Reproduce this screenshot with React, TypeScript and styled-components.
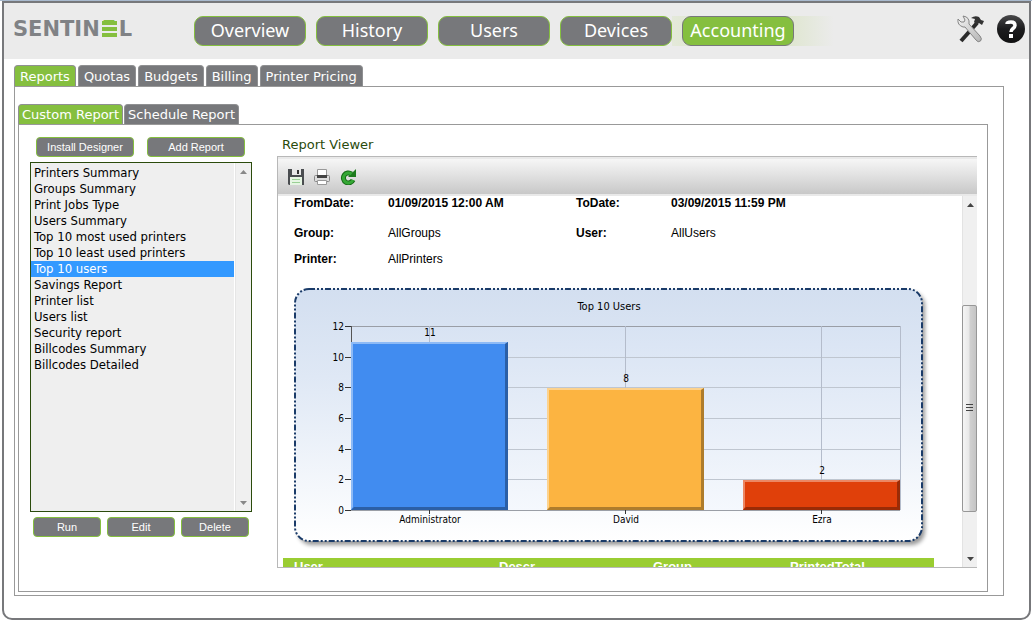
import React, { useState } from "react";
import styled, { createGlobalStyle } from "styled-components";

const green = "#85bf3f";
const grey = "#77787b";
const verdana = '"DejaVu Sans", Verdana, sans-serif';
const tahoma = '"DejaVu Sans Condensed", Tahoma, "DejaVu Sans", sans-serif';
const arial = '"Liberation Sans", Arial, sans-serif';

const GlobalStyle = createGlobalStyle`
  *, *::before, *::after { box-sizing: border-box; }
  body { margin: 0; background: #fff; font-family: ${verdana}; font-size: 13px; color: #000; }
  button, select { font-family: inherit; margin: 0; }
`;

const Page = styled.div`
  border-top: 1px solid #a9bace;
  padding: 0 1px 0 2px;
`;

const Frame = styled.div`
  border: 2px solid ${grey};
  border-radius: 0 0 10px 10px;
  padding-bottom: 22px;
`;

const Header = styled.header`
  display: flex;
  align-items: center;
  height: 56px;
  padding: 0 4px 0 9px;
  background: #ebebeb;
`;

const Logo = styled.div`
  display: flex;
  align-items: center;
  gap: 2px;
  width: 181px;
  padding-bottom: 4px;
  font-size: 21px;
  line-height: 20px;
  font-weight: 700;
  color: #808285;
`;

/* The E of the logo is cut into three bars. */
const LogoE = styled.span`
  position: relative;
  width: 15px;
  color: ${green};

  &::after {
    content: "";
    position: absolute;
    inset: 2px 0;
    background: linear-gradient(
      ${green} 4px,
      #ebebeb 4px 6px,
      ${green} 6px 10px,
      #ebebeb 10px 12px,
      ${green} 12px
    );
  }
`;

const MainNav = styled.nav`
  display: flex;
  gap: 10px;
  flex: 1;
`;

const NavButton = styled.button<{ $active?: boolean }>`
  width: 112px;
  height: 30px;
  padding: 0 0 2px;
  border: 1px solid ${(p) => (p.$active ? grey : green)};
  border-radius: 9px;
  background: ${(p) => (p.$active ? green : grey)};
  color: #fff;
  font-family: "Noto Sans", "Open Sans", sans-serif;
  font-size: 18px;
  line-height: 26px;
  cursor: pointer;
`;

const Glow = styled.span`
  display: flex;
  width: 180px;
  margin: 0 -46px 0 -10px;
  padding-left: 10px;
  background: linear-gradient(90deg, #e4e9da, #dfe6d0 15%, #dfe6d0 65%, #ebebeb 90%);
`;

const HeaderIcons = styled.div`
  display: flex;
  align-items: center;
  gap: 12px;
  padding-bottom: 4px;
`;

const IconButton = styled.button`
  display: flex;
  padding: 0;
  border: 0;
  background: none;
  cursor: pointer;
`;

const Main = styled.main`
  padding: 6px 25px 0 10px;
`;

const Tabs = styled.div<{ $gap: number }>`
  display: flex;
  gap: ${(p) => p.$gap}px;
`;

const Tab = styled.button<{ $active?: boolean; $tight?: boolean }>`
  height: ${(p) => (p.$tight ? 20 : 21)}px;
  padding: ${(p) => (p.$tight ? "0 3px" : "2px 5px 0")};
  border: 1px solid #8f9092;
  border-bottom: 0;
  border-radius: 4px 4px 0 0;
  background: ${(p) => (p.$active ? green : grey)};
  color: #fff;
  font-size: 13px;
  line-height: 18px;
  white-space: nowrap;
  cursor: pointer;
`;

const OuterPanel = styled.section`
  border: 1px solid #999;
  padding: 17px 15px 3px 3px;
`;

const InnerPanel = styled.section`
  display: flex;
  gap: 25px;
  border: 1px solid #999;
  padding: 12px 10px 23px 11px;
`;

const Side = styled.div`
  flex: none;
  width: 222px;
`;

const ButtonRow = styled.div<{ $gap: number; $inset: number }>`
  display: flex;
  gap: ${(p) => p.$gap}px;
  padding-left: ${(p) => p.$inset}px;
  margin-bottom: 5px;
`;

const SmallButton = styled.button<{ $wide?: boolean }>`
  width: ${(p) => (p.$wide ? 98 : 68)}px;
  height: 20px;
  padding: 0;
  border: 1px solid ${green};
  border-radius: 4px;
  background: ${grey};
  color: #fff;
  font-family: ${arial};
  font-size: 11px;
  line-height: 18px;
  cursor: pointer;
`;

const ListBox = styled.div`
  display: flex;
  height: 350px;
  margin-bottom: 5px;
  border: 1px solid #2b4b0c;
  background: #efefef;
`;

const ReportSelect = styled.select`
  flex: 1;
  min-width: 0;
  padding: 2px 0;
  border: 0;
  border-radius: 0;
  outline: 0;
  background: #efefef;
  font-family: ${tahoma};
  font-size: 13px;
  overflow: hidden;

  option {
    height: 16px;
    min-height: 16px;
    padding: 0 3px;
    line-height: 16px;
    color: #000;
  }
  option:checked {
    background: #39f linear-gradient(#39f, #39f);
    color: #fff;
    -webkit-text-fill-color: #fff;
  }
`;

const ScrollTrack = styled.div<{ $light?: boolean }>`
  flex: none;
  display: flex;
  flex-direction: column;
  align-items: center;
  width: ${(p) => (p.$light ? 17 : 15)}px;
  padding: 7px 0 6px;
  border-left: 1px solid ${(p) => (p.$light ? "#fff" : "#e3e3e3")};
  background: ${(p) => (p.$light ? "linear-gradient(90deg, #e6e6e6 1px, #f0f0f0 1px)" : "#f0f0f0")};
`;

const ScrollSpace = styled.div<{ $grow: number }>`
  flex: ${(p) => p.$grow};
`;

const Thumb = styled.div`
  display: flex;
  align-items: center;
  justify-content: center;
  width: 15px;
  height: 207px;
  margin-left: -1px;
  border: 1px solid #979797;
  border-radius: 2px;
  background: linear-gradient(90deg, #f5f5f5, #e9e9e9 45%, #d0d0d0 55%, #c4c4c4);
`;

const Viewer = styled.section`
  flex: 1;
  min-width: 0;
`;

const ViewerTitle = styled.h2`
  margin: 0;
  padding: 0 5px;
  height: 19px;
  color: #2b4b0c;
  font-size: 13px;
  font-weight: 400;
  line-height: 15px;
`;

const ViewerBox = styled.div`
  border: 1px solid #b8b8b8;
  border-right: 0;
`;

const Toolbar = styled.div`
  display: flex;
  align-items: center;
  gap: 10px;
  height: 39px;
  padding: 0 10px;
  border-top: 2px solid #e9e9e9;
  border-bottom: 2px solid #e9e9e9;
  background: linear-gradient(#f6f6f6, #e2e2e2 45%, #c8c8c8);
`;

const ReportArea = styled.div`
  display: flex;
  height: 371px;
  overflow: hidden;
`;

const Report = styled.div`
  flex: 1;
  min-width: 0;
  padding-left: 5px;
  overflow: hidden;
  font-family: ${arial};
`;

const Params = styled.dl`
  display: grid;
  grid-template-columns: 94px 188px 95px 1fr;
  grid-template-rows: 30px 26px 14px;
  margin: 0;
  padding-left: 11px;
  font-size: 12px;
  line-height: 14px;
`;

const Term = styled.dt`
  font-weight: 700;
`;

const Value = styled.dd<{ $bold?: boolean }>`
  margin: 0;
  font-weight: ${(p) => (p.$bold ? 700 : 400)};
`;

const Chart = styled.svg`
  display: block;
  margin: 16px 0 8px 6px;
  text {
    font-family: ${tahoma};
    font-size: 10px;
    fill: #000;
  }
  .title {
    font-size: 11px;
  }
`;

const Totals = styled.table`
  width: 651px;
  table-layout: fixed;
  border-collapse: collapse;
  background: #9acd32;
`;

const TotalsHead = styled.th<{ $w: number }>`
  width: ${(p) => p.$w}px;
  height: 18px;
  padding: 0 0 0 11px;
  color: #fff;
  font-size: 13px;
  line-height: 18px;
  text-align: left;
`;

const reports = [
  "Printers Summary",
  "Groups Summary",
  "Print Jobs Type",
  "Users Summary",
  "Top 10 most used printers",
  "Top 10 least used printers",
  "Top 10 users",
  "Savings Report",
  "Printer list",
  "Users list",
  "Security report",
  "Billcodes Summary",
  "Billcodes Detailed",
];

const bars = [
  { name: "Administrator", value: 11, x: 62, fill: "#418cf0", light: "#8dbaf6", dark: "#2b5fa6" },
  { name: "David", value: 8, x: 258, fill: "#fcb441", light: "#fdd28d", dark: "#ae7c2c" },
  { name: "Ezra", value: 2, x: 454, fill: "#e0400a", light: "#ec8763", dark: "#9a2b06" },
];

const ticks = [0, 2, 4, 6, 8, 10, 12];
const BASE = 228;
const scaleY = (v: number) => Math.round(BASE - (v * 184) / 12);

function BarChart() {
  return (
    <Chart width="640" height="268" viewBox="0 0 640 268" role="img" aria-label="Top 10 Users">
      <defs>
        <linearGradient id="card" x1="0" y1="0" x2="0" y2="1">
          <stop offset="0" stopColor="#d3dff0" />
          <stop offset="0.35" stopColor="#dfe8f5" />
          <stop offset="1" stopColor="#ffffff" />
        </linearGradient>
        <linearGradient id="plot" x1="0" y1="0" x2="0" y2="1">
          <stop offset="0" stopColor="#d8e3f3" />
          <stop offset="1" stopColor="#f5f8fd" />
        </linearGradient>
        <filter id="shade" x="-5%" y="-5%" width="110%" height="115%">
          <feGaussianBlur stdDeviation="2" />
        </filter>
      </defs>
      <rect x="9" y="10" width="627" height="253" rx="14" fill="#000" opacity="0.4" filter="url(#shade)" />
      <rect
        x="6"
        y="7"
        width="627"
        height="252"
        rx="14"
        fill="url(#card)"
        stroke="#1a3b69"
        strokeWidth="2"
        strokeDasharray="6 2 2 2 2 2"
      />
      <text className="title" x="320" y="28" textAnchor="middle">
        Top 10 Users
      </text>
      <rect x="62" y="44" width="549" height="184" fill="url(#plot)" />
      <g shapeRendering="crispEdges" strokeWidth="1">
        {ticks.map((v) => (
          <g key={v}>
            <path d={`M62 ${scaleY(v) + 0.5}H611`} stroke={v === 0 || v === 12 ? "#9a9ea6" : "#bfc6d0"} />
            <path d={`M56 ${scaleY(v) + 0.5}H62`} stroke="#333" />
          </g>
        ))}
        {[140.5, 336.5, 532.5, 611.5].map((x) => (
          <path key={x} d={`M${x} 44V228`} stroke="#b4bccb" />
        ))}
        <path d="M62.5 44V228" stroke="#555" />
      </g>
      {ticks.map((v) => (
        <text key={v} x="55" y={scaleY(v) + 4} textAnchor="end">
          {v}
        </text>
      ))}
      {bars.map((b) => {
        const top = scaleY(b.value) + 1;
        const r = b.x + 157;
        return (
          <g key={b.name}>
            <path d={`M${b.x} ${top}H${r}V${BASE}H${b.x}Z`} fill={b.fill} />
            <path d={`M${b.x} ${BASE}V${top}H${r}L${r - 3} ${top + 2}H${b.x + 2}V${BASE - 3}Z`} fill={b.light} />
            <path d={`M${r} ${top}V${BASE}H${b.x}L${b.x + 3} ${BASE - 3}H${r - 3}V${top + 2}Z`} fill={b.dark} />
            <path d={`M${b.x + 78.5} ${BASE}v4`} stroke="#333" />
            <text x={b.x + 79} y={top - 6} textAnchor="middle">
              {b.value}
            </text>
            <text x={b.x + 79} y="241" textAnchor="middle">
              {b.name}
            </text>
          </g>
        );
      })}
    </Chart>
  );
}

const Arrow = ({ up, color = "#444" }: { up?: boolean; color?: string }) => (
  <svg width="7" height="4" viewBox="0 0 7 4" aria-hidden="true">
    <path d={up ? "M0 4L3.5 0L7 4Z" : "M0 0H7L3.5 4Z"} fill={color} />
  </svg>
);

export default function App() {
  const [report, setReport] = useState("Top 10 users");
  return (
    <>
      <GlobalStyle />
      <Page>
        <Frame>
          <Header>
            <Logo>
              <span>SENTIN</span>
              <LogoE>E</LogoE>
              <span>L</span>
            </Logo>
            <MainNav>
              <NavButton>Overview</NavButton>
              <NavButton>History</NavButton>
              <NavButton>Users</NavButton>
              <NavButton>Devices</NavButton>
              <Glow>
                <NavButton $active>Accounting</NavButton>
              </Glow>
            </MainNav>
            <HeaderIcons>
              <IconButton aria-label="Settings">
                <svg width="28" height="28" viewBox="0 0 28 28">
                  <defs>
                    <linearGradient id="steel" x1="0" y1="0" x2="1" y2="1">
                      <stop offset="0" stopColor="#f4f4f4" />
                      <stop offset="1" stopColor="#b4b4b4" />
                    </linearGradient>
                  </defs>
                  <path d="M20 8L4 26" stroke="#2b2b2b" strokeWidth="4" />
                  <path d="M14 3Q18 0 22 2L24 5L27 6L25 10L22 8L20 10L17 7L18 4Z" fill="#333" />
                  <path
                    d="M6 1L8 5L7 7L4 7L1 4Q0 10 6 12L8 12L19 25Q21 28 23.500 26Q25.500 24 23 21L12 9Q13 2 6 1Z"
                    fill="url(#steel)"
                    stroke="#858585"
                  />
                </svg>
              </IconButton>
              <IconButton aria-label="Help">
                <svg width="28" height="28" viewBox="0 0 28 28">
                  <defs>
                    <linearGradient id="ball" x1="0" y1="0" x2="0" y2="1">
                      <stop offset="0" stopColor="#48484a" />
                      <stop offset="0.5" stopColor="#1c1c1e" />
                      <stop offset="1" stopColor="#111" />
                    </linearGradient>
                  </defs>
                  <circle cx="14" cy="14" r="14" fill="url(#ball)" />
                  <path
                    d="M10 9Q10 7 14 7Q18 7 18 10.500Q18 12 16 13.500Q14 15 14 17"
                    fill="none"
                    stroke="#fff"
                    strokeWidth="3.500"
                  />
                  <rect x="12" y="19" width="4" height="4" fill="#fff" />
                </svg>
              </IconButton>
            </HeaderIcons>
          </Header>
          <Main>
            <Tabs $gap={2}>
              <Tab $active>Reports</Tab>
              <Tab>Quotas</Tab>
              <Tab>Budgets</Tab>
              <Tab>Billing</Tab>
              <Tab>Printer Pricing</Tab>
            </Tabs>
            <OuterPanel>
              <Tabs $gap={1}>
                <Tab $active $tight>
                  Custom Report
                </Tab>
                <Tab $tight>Schedule Report</Tab>
              </Tabs>
              <InnerPanel>
                <Side>
                  <ButtonRow $gap={13} $inset={6}>
                    <SmallButton $wide>Install Designer</SmallButton>
                    <SmallButton $wide>Add Report</SmallButton>
                  </ButtonRow>
                  <ListBox>
                    <ReportSelect
                      size={20}
                      aria-label="Reports"
                      value={report}
                      onChange={(e) => setReport(e.target.value)}
                    >
                      {reports.map((r) => (
                        <option key={r}>{r}</option>
                      ))}
                    </ReportSelect>
                    <ScrollTrack $light>
                      <Arrow up color="#888" />
                      <ScrollSpace $grow={1} />
                      <Arrow color="#888" />
                    </ScrollTrack>
                  </ListBox>
                  <ButtonRow $gap={6} $inset={3}>
                    <SmallButton>Run</SmallButton>
                    <SmallButton>Edit</SmallButton>
                    <SmallButton>Delete</SmallButton>
                  </ButtonRow>
                </Side>
                <Viewer>
                  <ViewerTitle>Report Viewer</ViewerTitle>
                  <ViewerBox>
                    <Toolbar>
                      <IconButton aria-label="Save">
                        <svg width="16" height="16" viewBox="0 0 16 16">
                          <path d="M0 0H16V16H1L0 15Z" fill="#4a4d50" />
                          <rect x="4" y="0" width="9" height="6" fill="#e8e8e8" />
                          <rect x="9" y="1" width="2" height="4" fill="#333" />
                          <rect x="2" y="8" width="12" height="8" fill="#e6f5e3" />
                          <path d="M4 10.500H12M4 13.500H12" stroke="#9bd096" />
                        </svg>
                      </IconButton>
                      <IconButton aria-label="Print">
                        <svg width="16" height="16" viewBox="0 0 16 16">
                          <path d="M3.500 0.500H12.500V7H3.500Z" fill="#fff" stroke="#999" />
                          <rect x="0.500" y="6.500" width="15" height="6" rx="1" fill="#ddd" stroke="#888" />
                          <rect x="3" y="6" width="10" height="3" fill="#444" />
                          <path d="M3.500 11.500H12.500V15.500H3.500Z" fill="#fff" stroke="#999" />
                        </svg>
                      </IconButton>
                      <IconButton aria-label="Refresh">
                        <svg width="16" height="16" viewBox="0 0 16 16">
                          <path d="M11.500 5A5 5 0 1 0 13 11" fill="none" stroke="#176b17" strokeWidth="5" />
                          <path d="M16 0V8H8Z" fill="#1d7a1d" />
                          <path d="M11.500 5A5 5 0 1 0 13 11" fill="none" stroke="#35a835" strokeWidth="3" />
                        </svg>
                      </IconButton>
                    </Toolbar>
                    <ReportArea>
                      <Report>
                        <Params>
                          <Term>FromDate:</Term>
                          <Value $bold>01/09/2015 12:00 AM</Value>
                          <Term>ToDate:</Term>
                          <Value $bold>03/09/2015 11:59 PM</Value>
                          <Term>Group:</Term>
                          <Value>AllGroups</Value>
                          <Term>User:</Term>
                          <Value>AllUsers</Value>
                          <Term>Printer:</Term>
                          <Value>AllPrinters</Value>
                        </Params>
                        <BarChart />
                        <Totals>
                          <thead>
                            <tr>
                              <TotalsHead $w={205}>User</TotalsHead>
                              <TotalsHead $w={154}>Descr</TotalsHead>
                              <TotalsHead $w={137}>Group</TotalsHead>
                              <TotalsHead $w={155}>PrintedTotal</TotalsHead>
                            </tr>
                          </thead>
                        </Totals>
                      </Report>
                      <ScrollTrack>
                        <Arrow up />
                        <ScrollSpace $grow={95} />
                        <Thumb>
                          <svg width="7" height="8" viewBox="0 0 7 8" aria-hidden="true">
                            <path d="M0 0.500H7M0 3.500H7M0 6.500H7" stroke="#444" />
                          </svg>
                        </Thumb>
                        <ScrollSpace $grow={44} />
                        <Arrow />
                      </ScrollTrack>
                    </ReportArea>
                  </ViewerBox>
                </Viewer>
              </InnerPanel>
            </OuterPanel>
          </Main>
        </Frame>
      </Page>
    </>
  );
}
